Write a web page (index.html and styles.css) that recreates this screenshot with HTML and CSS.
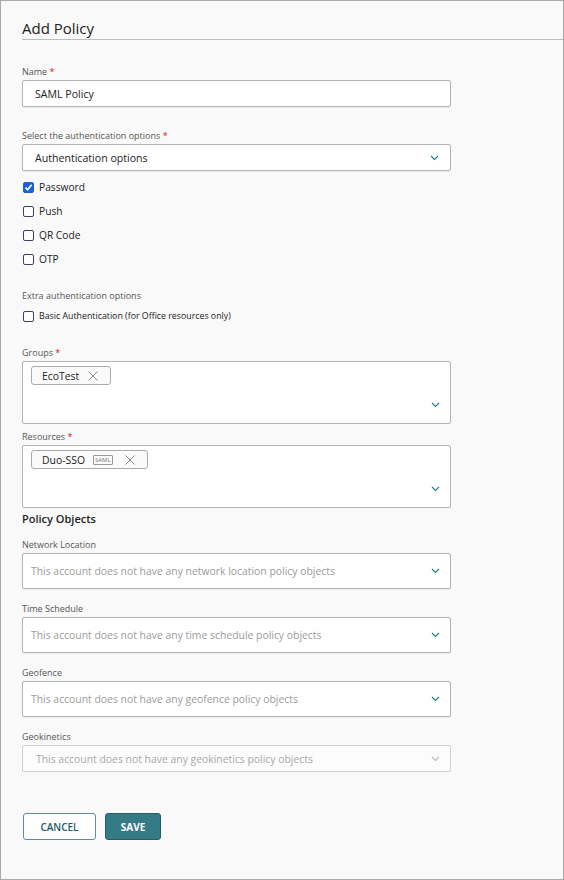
FILE: index.html
```html
<!DOCTYPE html>
<html lang="en">
<head>
    <meta charset="UTF-8">
    <meta name="viewport" content="width=device-width, initial-scale=1.0">
    <title>Add Policy</title>
    <link rel="stylesheet" href="styles.css">
</head>
<body>

    <div class="page">
        <h1 class="title">Add Policy</h1>

        <div class="form">
            <div class="field first">
                <div class="label">Name <span class="req">*</span></div>
                <div class="input">SAML Policy</div>
            </div>

            <div class="field auth">
                <div class="label">Select the authentication options <span class="req">*</span></div>
                <div class="input select">
                    <span>Authentication options</span>
                    <svg class="chev" width="9" height="6" viewBox="0 0 9 6"><polyline points="1,1 4.5,4.5 8,1" /></svg>
                </div>
            </div>

            <div class="checks">
                <div class="check"><span class="box on"><svg width="9" height="9" viewBox="0 0 9 9"><polyline points="1.5,4.6 3.6,6.8 7.6,1.8" /></svg></span>Password</div>
                <div class="check"><span class="box"></span>Push</div>
                <div class="check"><span class="box"></span>QR Code</div>
                <div class="check"><span class="box"></span>OTP</div>
            </div>

            <div class="field extra">
                <div class="label">Extra authentication options</div>
                <div class="check small"><span class="box"></span>Basic Authentication (for Office resources only)</div>
            </div>

            <div class="field groups">
                <div class="label">Groups <span class="req">*</span></div>
                <div class="multi">
                    <div class="chips">
                        <span class="chip">EcoTest <svg class="x" width="10" height="10" viewBox="0 0 10 10"><path d="M0.5 0.5 L9.5 9.5 M9.5 0.5 L0.5 9.5" /></svg></span>
                    </div>
                    <svg class="chev" width="9" height="6" viewBox="0 0 9 6"><polyline points="1,1 4.5,4.5 8,1" /></svg>
                </div>
            </div>

            <div class="field resources">
                <div class="label">Resources <span class="req">*</span></div>
                <div class="multi">
                    <div class="chips">
                        <span class="chip">Duo-SSO <span class="tag">SAML</span> <svg class="x" width="10" height="10" viewBox="0 0 10 10"><path d="M0.5 0.5 L9.5 9.5 M9.5 0.5 L0.5 9.5" /></svg></span>
                    </div>
                    <svg class="chev" width="9" height="6" viewBox="0 0 9 6"><polyline points="1,1 4.5,4.5 8,1" /></svg>
                </div>
            </div>

            <h2 class="section">Policy Objects</h2>

            <div class="field po first-po">
                <div class="label">Network Location</div>
                <div class="input tall">
                    <span class="ph">This account does not have any network location policy objects</span>
                    <svg class="chev" width="9" height="6" viewBox="0 0 9 6"><polyline points="1,1 4.5,4.5 8,1" /></svg>
                </div>
            </div>

            <div class="field po">
                <div class="label">Time Schedule</div>
                <div class="input tall">
                    <span class="ph">This account does not have any time schedule policy objects</span>
                    <svg class="chev" width="9" height="6" viewBox="0 0 9 6"><polyline points="1,1 4.5,4.5 8,1" /></svg>
                </div>
            </div>

            <div class="field po">
                <div class="label">Geofence</div>
                <div class="input tall">
                    <span class="ph">This account does not have any geofence policy objects</span>
                    <svg class="chev" width="9" height="6" viewBox="0 0 9 6"><polyline points="1,1 4.5,4.5 8,1" /></svg>
                </div>
            </div>

            <div class="field po">
                <div class="label">Geokinetics</div>
                <div class="input disabled">
                    <span class="ph">This account does not have any geokinetics policy objects</span>
                    <svg class="chev" width="9" height="6" viewBox="0 0 9 6"><polyline points="1,1 4.5,4.5 8,1" /></svg>
                </div>
            </div>

            <div class="buttons">
                <button class="btn cancel">CANCEL</button>
                <button class="btn save">SAVE</button>
            </div>
        </div>
    </div>

</body>
</html>
```

FILE: styles.css
```css
body {
    margin: 0;
    font-family: "Open Sans", "Liberation Sans", sans-serif;
    color: #333;
}

.page {
    width: 564px;
    height: 880px;
    box-sizing: border-box;
    border: 1px solid #a9a9a9;
    background-color: #f9f9f9;
    padding-left: 21px;
}

.title {
    margin: 0;
    padding-top: 17px;
    padding-bottom: 1px;
    font-size: 15px;
    line-height: 20px;
    font-weight: 400;
    color: #222;
    border-bottom: 1px solid #bcbcbc;
}

.form {
    width: 429px;
}

.field {
    margin-top: 14px;
}

.field.first { margin-top: 26px; }
.field.auth { margin-top: 23px; }
.field.extra { margin-top: 19px; }
.field.groups { margin-top: 19px; }
.field.resources { margin-top: 7px; }
.field.first-po { margin-top: 13px; }

.label {
    font-size: 9px;
    line-height: 12px;
    color: #555;
    margin-bottom: 2px;
}

.req {
    color: #d0112b;
}

.input {
    height: 27px;
    box-sizing: border-box;
    border: 1px solid #b4b4b4;
    border-radius: 2px;
    background: #fff;
    padding: 0 11px 0 12px;
    display: flex;
    align-items: center;
    justify-content: space-between;
    font-size: 10.6px;
    color: #222;
    box-shadow: 0 1px 1px rgba(0, 0, 0, 0.06);
}

.input.tall {
    height: 36px;
    padding-left: 8px;
    padding-right: 10px;
}

.input.disabled {
    padding-left: 13px;
    padding-right: 10px;
    background: #fcfcfc;
    border-color: #cfcfcf;
    box-shadow: none;
}

.ph {
    color: #9b9b9b;
    font-size: 10.4px;
}

.input.disabled .ph {
    color: #a8a8a8;
}

.chev polyline {
    fill: none;
    stroke: #1f7c88;
    stroke-width: 1.1;
}

.input.disabled .chev polyline {
    stroke: #b8b8b8;
}

.checks {
    margin-top: 4px;
}

.check {
    height: 24px;
    display: flex;
    align-items: center;
    font-size: 10.2px;
    color: #222;
}

.check.small {
    font-size: 8.8px;
}

.box {
    width: 11px;
    height: 11px;
    box-sizing: border-box;
    border: 1.5px solid #40405a;
    border-radius: 2px;
    margin-left: 1px;
    margin-right: 5px;
    background: #fff;
    display: flex;
    align-items: center;
    justify-content: center;
}

.box.on {
    background: #1d5fd6;
    border-color: #1d5fd6;
}

.box.on polyline {
    fill: none;
    stroke: #fff;
    stroke-width: 1.6;
}

.multi {
    height: 63px;
    box-sizing: border-box;
    border: 1px solid #b4b4b4;
    border-radius: 2px;
    background: #fff;
    padding: 4px 10px 0 8px;
    display: flex;
    justify-content: space-between;
}

.chips {
    display: flex;
    align-items: flex-start;
}

.multi .chev {
    align-self: flex-end;
    margin-bottom: 15px;
}

.chip {
    display: inline-flex;
    align-items: center;
    height: 19px;
    box-sizing: border-box;
    border: 1px solid #aaa;
    border-radius: 3px;
    background: #fafafa;
    padding: 0 12px 0 10px;
    font-size: 10.4px;
    color: #222;
}

.x {
    margin-left: 9px;
}

.x path {
    stroke: #8a8a8a;
    stroke-width: 1;
}

.tag {
    font-size: 6px;
    line-height: 8px;
    color: #777;
    border: 1px solid #999;
    border-radius: 1px;
    padding: 0 1px;
    margin-left: 8px;
}

.tag + .x {
    margin-left: 12px;
}

.section {
    margin: 4px 0 0 0;
    font-size: 11px;
    line-height: 14px;
    font-weight: 600;
    color: #222;
}

.buttons {
    margin-top: 41px;
    display: flex;
    gap: 9px;
    padding-left: 1px;
}

.btn {
    height: 27px;
    border-radius: 3px;
    font-family: "Open Sans", "Liberation Sans", sans-serif;
    font-size: 10px;
    font-weight: 600;
}

.cancel {
    width: 73px;
    background: #fff;
    border: 1px solid #5d8f98;
    color: #1e5a66;
}

.save {
    width: 56px;
    background: #357b86;
    border: 1px solid #245e69;
    color: #fff;
    font-weight: 700;
}
```
